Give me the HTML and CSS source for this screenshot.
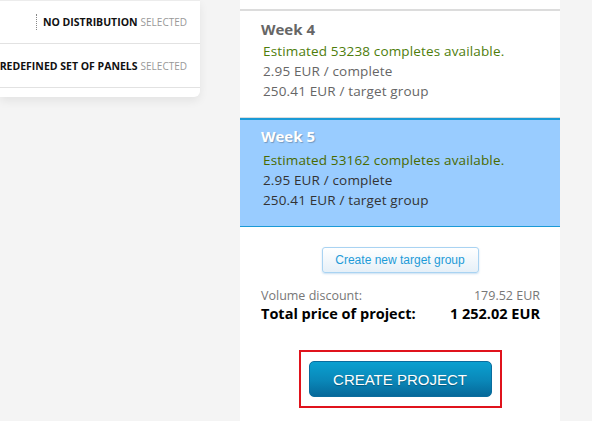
FILE: index.html
```html
<!DOCTYPE html>
<html>
<head>
<meta charset="utf-8">
<link rel="stylesheet" href="styles.css">
</head>
<body>
<div class="page">
  <div class="side">
    <div class="card">
      <div class="opt-row">
        <span class="opt-label sep">NO DISTRIBUTION</span><span class="opt-state">SELECTED</span>
      </div>
      <div class="opt-row">
        <span class="opt-label">PREDEFINED SET OF PANELS</span><span class="opt-state">SELECTED</span>
      </div>
    </div>
  </div>
  <div class="panel">
    <div class="weeks">
      <div class="week">
        <div class="week-title">Week 4</div>
        <div class="week-line est">Estimated 53238 completes available.</div>
        <div class="week-line">2.95 EUR / complete</div>
        <div class="week-line">250.41 EUR / target group</div>
      </div>
      <div class="week selected">
        <div class="week-title">Week 5</div>
        <div class="week-line est">Estimated 53162 completes available.</div>
        <div class="week-line">2.95 EUR / complete</div>
        <div class="week-line">250.41 EUR / target group</div>
      </div>
    </div>
    <div class="new-group">
      <button class="btn-light">Create new target group</button>
    </div>
    <div class="summary">
      <div class="sum-row discount"><span>Volume discount:</span><span>179.52 EUR</span></div>
      <div class="sum-row total"><span>Total price of project:</span><span>1 252.02 EUR</span></div>
    </div>
    <div class="create-wrap">
      <div class="highlight">
        <button class="btn-primary">CREATE PROJECT</button>
      </div>
    </div>
  </div>
</div>
</body>
</html>
```

FILE: styles.css
```css
html, body {
  margin: 0;
  padding: 0;
  background: #f4f4f4;
  height: 100%;
  overflow: hidden;
}
body {
  font-family: "Open Sans", "Noto Sans", sans-serif;
}
.page {
  display: flex;
  gap: 40px;
  height: 421px;
}
.side {
  width: 200px;
  flex: none;
}
.card {
  background: #fff;
  border-top: 1px solid #ececec;
  border-radius: 0 0 6px 0;
  box-shadow: 0 4px 10px rgba(0, 0, 0, 0.07);
  height: 96px;
  overflow: hidden;
}
.opt-row {
  display: flex;
  justify-content: flex-end;
  align-items: center;
  height: 42px;
  border-bottom: 1px solid #e2e2e2;
  padding-right: 13px;
  white-space: nowrap;
  font-size: 10px;
  line-height: 14px;
}
.opt-row + .opt-row {
  height: 43px;
}
.opt-label {
  font-weight: 700;
  font-size: 10.5px;
  color: #111;
  margin-right: 3px;
}
.opt-label.sep {
  border-left: 1px dotted #888;
  padding-left: 6px;
  padding-top: 1px;
  padding-bottom: 1px;
}
.opt-state {
  color: #999;
}
.panel {
  width: 320px;
  flex: none;
  background: #fff;
  padding-top: 9px;
}
.weeks {
  border-top: 2px solid #dcdcdc;
}
.week {
  height: 90px;
  padding: 8px 20px 8px 21px;
  border-bottom: 1px solid #dcdcdc;
}
.week.selected {
  background: #99ccff;
  border-top: 2px solid #1a9ad6;
  border-bottom: 1px solid #1a9ad6;
  height: 92px;
  padding-top: 6px;
}
.week-title {
  font-size: 15px;
  font-weight: 700;
  line-height: 20px;
  color: #666;
  margin-bottom: 2px;
}
.week.selected .week-title {
  color: #fff;
  text-shadow: 1px 1px 1px rgba(0, 0, 0, 0.25);
  margin-bottom: 4px;
}
.week-line {
  font-size: 13.5px;
  letter-spacing: 0.15px;
  line-height: 20px;
  color: #666;
  padding-left: 2px;
}
.week-line.est {
  color: #4e7d0b;
}
.week.selected .week-line {
  color: #333;
}
.week.selected .week-line.est {
  color: #4a6a00;
}
.new-group {
  display: flex;
  justify-content: center;
  padding-top: 20px;
}
.btn-light {
  font-family: "Liberation Sans", Arial, sans-serif;
  font-size: 12px;
  color: #1d9bd8;
  width: 157px;
  height: 26px;
  padding: 0;
  background: linear-gradient(#ffffff, #e6f0f8);
  border: 1px solid #a9d3f2;
  border-radius: 3px;
  box-shadow: 0 1px 2px rgba(80, 150, 210, 0.3);
}
.summary {
  padding: 14px 20px 0 21px;
}
.sum-row {
  display: flex;
  justify-content: space-between;
}
.discount {
  font-size: 12.5px;
  line-height: 18px;
  color: #777;
}
.total {
  font-size: 14.5px;
  font-weight: 700;
  line-height: 18px;
  color: #000;
}
.create-wrap {
  display: flex;
  justify-content: center;
  padding-top: 27px;
}
.highlight {
  border: 2px solid #e0131c;
  padding: 9px 8px;
}
.btn-primary {
  display: block;
  font-family: "Liberation Sans", Arial, sans-serif;
  font-size: 15px;
  color: #fff;
  width: 183px;
  height: 36px;
  padding: 0;
  border: 1px solid #0a6d9e;
  border-radius: 5px;
  background: linear-gradient(#0aa0d0, #0a87b8 55%, #06699a);
  text-shadow: 0 1px 1px rgba(0, 0, 0, 0.3);
}
```
